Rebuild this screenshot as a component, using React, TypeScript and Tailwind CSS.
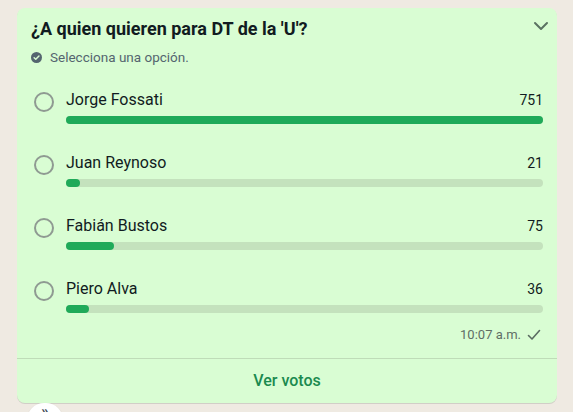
interface PollOption {
  name: string;
  votes: number;
  fill: number; // fill width in px, track is 477px
}

const options: PollOption[] = [
  { name: "Jorge Fossati", votes: 751, fill: 477 },
  { name: "Juan Reynoso", votes: 21, fill: 14 },
  { name: "Fabián Bustos", votes: 75, fill: 48 },
  { name: "Piero Alva", votes: 36, fill: 23 },
];

function CheckBadge() {
  return (
    <svg width="11" height="11" viewBox="0 0 12 12" className="shrink-0">
      <circle cx="6" cy="6" r="6" fill="#54656f" />
      <path
        d="M3.4 6.2 L5.2 8 L8.7 4.4"
        fill="none"
        stroke="#d9fdd3"
        strokeWidth="1.6"
        strokeLinecap="round"
        strokeLinejoin="round"
      />
    </svg>
  );
}

function Chevron() {
  return (
    <svg width="16" height="10" viewBox="0 0 16 10">
      <path
        d="M2 2 L8 8 L14 2"
        fill="none"
        stroke="#5b7262"
        strokeWidth="2"
        strokeLinecap="round"
        strokeLinejoin="round"
      />
    </svg>
  );
}

function Tick() {
  return (
    <svg width="14" height="12" viewBox="0 0 14 12">
      <path
        d="M1.5 6.5 L5 10 L12.5 1.5"
        fill="none"
        stroke="#5a6b61"
        strokeWidth="1.6"
        strokeLinecap="round"
        strokeLinejoin="round"
      />
    </svg>
  );
}

function OptionRow({ option }: { option: PollOption }) {
  return (
    <div className="flex h-[36px]">
      {/* Radio */}
      <div className="w-[35px] shrink-0">
        <div className="ml-[3px] mt-[4px] h-[20px] w-[20px] rounded-full border-2 border-[#8f9a92]" />
      </div>

      <div className="flex-1">
        <div className="flex h-[24px] items-center justify-between">
          <span className="text-[16px] text-[#111b21]">{option.name}</span>
          <span className="text-[14px] text-[#111b21]">{option.votes}</span>
        </div>
        <div className="mt-[4px] h-[8px] w-full rounded-full bg-[#c4e2bd]">
          <div
            className="h-full rounded-full bg-[#1faa59]"
            style={{ width: `${option.fill}px` }}
          />
        </div>
      </div>
    </div>
  );
}

export default function App() {
  return (
    <div
      className="h-[412px] w-[573px] overflow-hidden bg-[#efeae2] pl-[17px] pt-[8px]"
      style={{ fontFamily: "Roboto, 'Noto Sans', Arial, sans-serif" }}
    >
      {/* Poll bubble */}
      <div className="flex h-[395px] w-[540px] flex-col rounded-[8px] bg-[#d9fdd3] shadow-[0_1px_0.5px_rgba(11,20,26,0.13)]">
        <div className="px-[14px] pt-[8px]">
          {/* Header */}
          <div className="flex h-[24px] items-center justify-between">
            <h1 className="text-[18px] font-bold text-[#111b21]">
              ¿A quien quieren para DT de la 'U'?
            </h1>
            <div className="mr-[-6px] mt-[-4px]">
              <Chevron />
            </div>
          </div>

          {/* Subtitle */}
          <div className="mt-[7px] flex h-[20px] items-center gap-[8px]">
            <CheckBadge />
            <span className="text-[13.5px] text-[#54656f]">
              Selecciona una opción.
            </span>
          </div>

          {/* Options */}
          <div className="mt-[21px] flex flex-col gap-[27px]">
            {options.map((o) => (
              <OptionRow key={o.name} option={o} />
            ))}
          </div>

          {/* Time */}
          <div className="mt-[14px] flex h-[16px] items-center justify-end gap-[6px] pr-[2px]">
            <span className="text-[13px] text-[#5f6e66]">10:07 a.m.</span>
            <Tick />
          </div>
        </div>

        <div className="mt-[15px] h-px w-full bg-[#bfdcb8]" />

        <div className="flex flex-1 items-center justify-center">
          <span className="text-[16px] font-medium text-[#1b8a4f]">
            Ver votos
          </span>
        </div>
      </div>

      {/* Scroll button peeking below */}
      <div className="ml-[10px] flex h-[34px] w-[36px] justify-center rounded-full bg-white pt-[1px] shadow-[0_1px_2px_rgba(0,0,0,0.15)]">
        <span className="text-[15px] font-bold leading-[14px] text-[#3b4a54]">
          »
        </span>
      </div>
    </div>
  );
}
